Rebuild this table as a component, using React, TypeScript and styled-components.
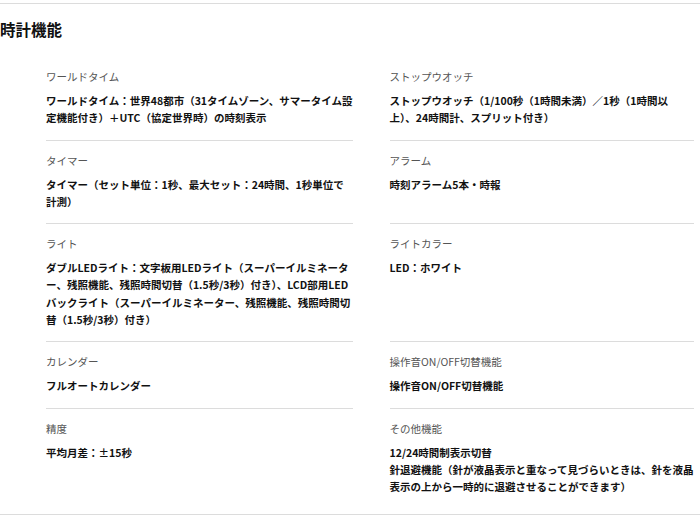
import React from 'react';
import styled, { createGlobalStyle } from 'styled-components';

interface ISpec {
  label: string;
  lines: string[];
}

// lines are the visual lines of the value text
const specs: ISpec[] = [
  {
    label: 'ワールドタイム',
    lines: ['ワールドタイム：世界48都市（31タイムゾーン、サマータイム設', '定機能付き）＋UTC（協定世界時）の時刻表示'],
  },
  {
    label: 'ストップウオッチ',
    lines: ['ストップウオッチ（1/100秒（1時間未満）／1秒（1時間以', '上）、24時間計、スプリット付き）'],
  },
  {
    label: 'タイマー',
    lines: ['タイマー（セット単位：1秒、最大セット：24時間、1秒単位で', '計測）'],
  },
  { label: 'アラーム', lines: ['時刻アラーム5本・時報'] },
  {
    label: 'ライト',
    lines: [
      'ダブルLEDライト：文字板用LEDライト（スーパーイルミネータ',
      'ー、残照機能、残照時間切替（1.5秒/3秒）付き）、LCD部用LED',
      'バックライト（スーパーイルミネーター、残照機能、残照時間切',
      '替（1.5秒/3秒）付き）',
    ],
  },
  { label: 'ライトカラー', lines: ['LED：ホワイト'] },
  { label: 'カレンダー', lines: ['フルオートカレンダー'] },
  { label: '操作音ON/OFF切替機能', lines: ['操作音ON/OFF切替機能'] },
  { label: '精度', lines: ['平均月差：±15秒'] },
  {
    label: 'その他機能',
    lines: [
      '12/24時間制表示切替',
      '針退避機能（針が液晶表示と重なって見づらいときは、針を液晶',
      '表示の上から一時的に退避させることができます）',
    ],
  },
];

function App() {
  return (
    <>
      <GlobalStyle />
      <SpecSection>
        <SectionTitle>時計機能</SectionTitle>
        <SpecGrid>
          {specs.map((s, i) => (
            <SpecCell key={s.label} $last={i >= specs.length - 2}>
              <SpecLabel>{s.label}</SpecLabel>
              <SpecValue>
                {s.lines.map(l => (
                  <ValueLine key={l}>{l}</ValueLine>
                ))}
              </SpecValue>
            </SpecCell>
          ))}
        </SpecGrid>
      </SpecSection>
    </>
  );
}

export default App;

const GlobalStyle = createGlobalStyle`
  body {
    margin: 0;
    background: #fff;
    font-family: "Noto Sans CJK JP", "Noto Sans", sans-serif;
    color: #111;
  }
`;

const SpecSection = styled.section`
  margin-top: 3px;
  border-top: 1px solid #dcdcdc;
  border-bottom: 1px solid #dcdcdc;
  width: 700px;
  padding-bottom: 5px;
`;

const SectionTitle = styled.h2`
  margin: 0;
  padding: 14px 0 0;
  font-size: 15.5px;
  line-height: 22px;
  font-weight: 700;
  color: #111;
`;

const SpecGrid = styled.div`
  display: grid;
  grid-template-columns: 1fr 1fr;
  column-gap: 37px;
  padding: 17px 6px 0 46px;
`;

const SpecCell = styled.div<{ $last: boolean }>`
  padding: 11px 0 13px;
  border-bottom: ${p => (p.$last ? 'none' : '1px solid #dcdcdc')};
`;

const SpecLabel = styled.div`
  font-size: 10.5px;
  line-height: 17px;
  color: #555;
  font-weight: 400;
`;

const SpecValue = styled.div`
  margin-top: 7px;
  font-size: 10.5px;
  line-height: 17.3px;
  font-weight: 700;
  color: #111;
`;

const ValueLine = styled.div`
  white-space: nowrap;
`;
